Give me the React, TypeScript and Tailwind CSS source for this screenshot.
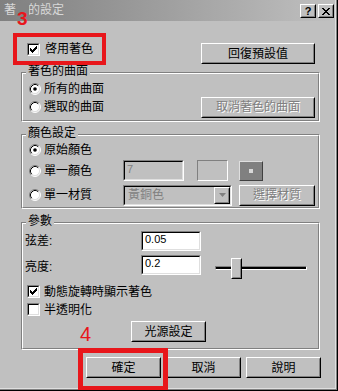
import React from "react";

type Kids = { children?: React.ReactNode };

// raised 3d button, win9x style
function Button({ className, children, disabled }: Kids & { className: string; disabled?: boolean }) {
  return (
    <div className={`${className} shrink-0 border border-t-white border-l-white border-r-black border-b-black`}>
      <div className="h-full flex items-center justify-center border border-t-[#c0c0c0] border-l-[#c0c0c0] border-r-[#808080] border-b-[#808080]">
        <span className={disabled ? "leading-[14px] text-[#808080] [text-shadow:1px_1px_0_#ffffff]" : "leading-[14px] text-black"}>
          {children}
        </span>
      </div>
    </div>
  );
}

function Sunken({ className, children }: Kids & { className: string }) {
  return (
    <div className={`${className} shrink-0 border border-t-[#808080] border-l-[#808080] border-r-white border-b-white`}>
      <div className="h-full flex items-center border border-t-black border-l-black border-r-[#dfdfdf] border-b-[#dfdfdf]">
        {children}
      </div>
    </div>
  );
}

function Check({ checked }: { checked?: boolean }) {
  return (
    <div className="w-[13px] h-[13px] shrink-0 border border-t-[#808080] border-l-[#808080] border-r-white border-b-white">
      <div className="w-full h-full bg-white border border-t-black border-l-black border-r-[#dfdfdf] border-b-[#dfdfdf]">
        {checked && (
          <svg width="9" height="9" viewBox="0 0 9 9" shapeRendering="crispEdges">
            <path
              d="M1 3h1v3h-1z M2 4h1v3h-1z M3 5h1v3h-1z M4 4h1v3h-1z M5 3h1v3h-1z M6 2h1v3h-1z M7 1h1v3h-1z"
              fill="#000"
            />
          </svg>
        )}
      </div>
    </div>
  );
}

function Radio({ checked }: { checked?: boolean }) {
  return (
    <svg width="12" height="12" viewBox="0 0 12 12" className="shrink-0">
      <circle cx="6" cy="6" r="5" fill="#fff" />
      <path d="M2.11 9.89 A5.5 5.5 0 0 1 9.89 2.11" stroke="#808080" fill="none" />
      <path d="M9.89 2.11 A5.5 5.5 0 0 1 2.11 9.89" stroke="#fff" fill="none" />
      <path d="M2.82 9.18 A4.5 4.5 0 0 1 9.18 2.82" stroke="#000" fill="none" />
      <path d="M9.18 2.82 A4.5 4.5 0 0 1 2.82 9.18" stroke="#dfdfdf" fill="none" />
      {checked && <circle cx="6" cy="6" r="1.8" fill="#000" />}
    </svg>
  );
}

function Group({ title, className, children }: Kids & { title: string; className: string }) {
  return (
    <div className={`${className} relative w-[299px] border border-t-[#808080] border-l-[#808080] border-r-white border-b-white`}>
      <div className="h-full border border-t-white border-l-white border-r-[#808080] border-b-[#808080]">{children}</div>
      <div className="absolute left-[4px] top-[-9px] bg-[#c0c0c0] px-[2px] leading-[14px]">{title}</div>
    </div>
  );
}

function TitleBtn({ children }: Kids) {
  return (
    <div className="w-[16px] h-[14px] border border-t-white border-l-white border-r-black border-b-black bg-[#c0c0c0]">
      <div className="h-full flex items-center justify-center border border-t-[#c0c0c0] border-l-[#c0c0c0] border-r-[#808080] border-b-[#808080]">
        {children}
      </div>
    </div>
  );
}

export default function App() {
  return (
    <div className="relative w-[338px] h-[391px] overflow-hidden bg-[#c0c0c0] text-[12px] text-black font-['Liberation_Sans','Noto_Sans_CJK_TC',sans-serif] border-r border-b border-black">
      <div className="h-full border-r border-b border-[#808080]">
        <div className="h-full border-r border-b border-[#dfdfdf]">
          {/* title bar */}
          <div className="h-[21px] flex items-start bg-linear-to-r from-[#808080] to-[#c0c0c0]">
            <span className="pl-[4px] pt-[3px] leading-[15px] text-[#d8d8d8]">著色的設定</span>
            <div className="ml-auto mt-[4px] mr-[1px] flex gap-[2px]">
              <TitleBtn>
                <span className="font-bold text-[11px] leading-[11px] font-['Liberation_Sans',sans-serif]">?</span>
              </TitleBtn>
              <TitleBtn>
                <svg width="8" height="7" viewBox="0 0 8 7" shapeRendering="crispEdges">
                  <path
                    d="M0 0h2v1h-2z M6 0h2v1h-2z M1 1h2v1h-2z M5 1h2v1h-2z M2 2h4v1h-4z M3 3h2v1h-2z M2 4h4v1h-4z M1 5h2v1h-2z M5 5h2v1h-2z M0 6h2v1h-2z M6 6h2v1h-2z"
                    fill="#000"
                  />
                </svg>
              </TitleBtn>
            </div>
          </div>

          <div className="flex flex-col pl-[21px]">
            {/* enable row */}
            <div className="mt-[22px] h-[20px] w-[299px] pr-[5px] flex items-start justify-between">
              <div className="pl-[6px] flex items-center gap-[5px]">
                <Check checked />
                <span className="leading-[13px]">啓用著色</span>
              </div>
              <Button className="w-[114px] h-[21px]">回復預設值</Button>
            </div>

            <Group title="著色的曲面" className="mt-[9px] h-[50px]">
              <div className="pt-[9px] pl-[6px] pr-[3px] flex flex-col">
                <div className="h-[12px] flex items-center gap-[3px]">
                  <Radio checked />
                  <span className="leading-[14px]">所有的曲面</span>
                </div>
                <div className="mt-[2px] h-[20px] flex items-center justify-between">
                  <div className="flex items-center gap-[3px]">
                    <Radio />
                    <span className="leading-[14px]">選取的曲面</span>
                  </div>
                  <Button className="w-[114px] h-[21px]" disabled>
                    取消著色的曲面
                  </Button>
                </div>
              </div>
            </Group>

            <Group title="顏色設定" className="mt-[12px] h-[75px]">
              <div className="pt-[7px] pl-[6px] flex flex-col">
                <div className="h-[14px] flex items-center gap-[3px]">
                  <Radio checked />
                  <span className="leading-[14px]">原始顏色</span>
                </div>
                <div className="mt-[3px] h-[21px] flex items-center">
                  <div className="w-[94px] flex items-center gap-[3px]">
                    <Radio />
                    <span className="leading-[14px]">單一顏色</span>
                  </div>
                  <Sunken className="w-[61px] h-[21px]">
                    <span className="pl-[2px] text-[11px] text-[#808080] leading-[13px] self-start pt-[1px]">7</span>
                  </Sunken>
                  <div className="ml-[13px] w-[31px] h-[21px] border border-t-[#808080] border-l-[#808080] border-r-white border-b-white" />
                  <div className="ml-[11px] w-[24px] h-[20px] border border-t-[#dfdfdf] border-l-[#dfdfdf] border-r-[#404040] border-b-[#404040] bg-[#808080] flex items-center justify-center">
                    <div className="w-[4px] h-[4px] bg-[#d8d8d8]" />
                  </div>
                </div>
                <div className="mt-[3px] h-[22px] flex items-center">
                  <div className="w-[94px] flex items-center gap-[3px]">
                    <Radio />
                    <span className="leading-[14px]">單一材質</span>
                  </div>
                  <Sunken className="w-[109px] h-[21px]">
                    <span className="pl-[3px] text-[#808080] leading-[14px] flex-1">黃銅色</span>
                    <div className="w-[16px] h-full border border-t-white border-l-white border-r-black border-b-black">
                      <div className="h-full flex items-center justify-center border border-t-[#c0c0c0] border-l-[#c0c0c0] border-r-[#808080] border-b-[#808080]">
                        <svg width="7" height="5" viewBox="0 0 7 5">
                          <path d="M0 0h7l-3.5 4z" fill="#808080" />
                        </svg>
                      </div>
                    </div>
                  </Sunken>
                  <Button className="ml-[7px] w-[76px] h-[21px]" disabled>
                    選擇材質
                  </Button>
                </div>
              </div>
            </Group>

            <Group title="參數" className="mt-[13px] h-[128px]">
              <div className="pt-[7px] flex flex-col">
                <div className="h-[20px] flex items-center">
                  <span className="w-[118px] pl-[2px] leading-[14px]">弦差:</span>
                  <Sunken className="w-[60px] h-[20px] bg-white">
                    <span className="pl-[2px] text-[11px] leading-[13px] self-start">0.05</span>
                  </Sunken>
                </div>
                <div className="mt-[4px] h-[24px] flex items-start">
                  <span className="w-[118px] h-[20px] pl-[2px] leading-[24px]">亮度:</span>
                  <Sunken className="w-[60px] h-[20px] bg-white">
                    <span className="pl-[2px] text-[11px] leading-[13px] self-start">0.2</span>
                  </Sunken>
                  <div className="relative ml-[14px] w-[92px] h-[24px]">
                    <div className="mt-[11px] h-[4px] border border-t-[#808080] border-l-[#808080] border-r-white border-b-white">
                      <div className="h-[2px] bg-black" />
                    </div>
                    <div className="absolute left-[16px] top-[3px] w-[11px] h-[21px] border border-t-white border-l-white border-r-black border-b-black">
                      <div className="h-full bg-[#c0c0c0] border border-t-[#c0c0c0] border-l-[#c0c0c0] border-r-[#808080] border-b-[#808080]" />
                    </div>
                  </div>
                </div>
                <div className="mt-[6px] h-[13px] pl-[4px] flex items-center gap-[4px]">
                  <Check checked />
                  <span className="leading-[14px]">動態旋轉時顯示著色</span>
                </div>
                <div className="mt-[5px] h-[13px] pl-[4px] flex items-center gap-[4px]">
                  <Check />
                  <span className="leading-[14px]">半透明化</span>
                </div>
                <div className="mt-[5px] pl-[108px]">
                  <Button className="w-[75px] h-[21px]">光源設定</Button>
                </div>
              </div>
            </Group>

            <div className="mt-[7px] pl-[65px] flex gap-[5px]">
              <Button className="w-[75px] h-[21px]">確定</Button>
              <Button className="w-[75px] h-[21px]">取消</Button>
              <Button className="w-[75px] h-[21px]">說明</Button>
            </div>
          </div>
        </div>
      </div>

      {/* red annotations drawn over the dialog */}
      <div className="absolute left-[16px] top-[3px] w-[13px] h-[16px] bg-[#848484]" />
      <span className="absolute left-[17px] top-[9px] text-[19px] leading-[19px] font-bold text-[#e8161b] font-['Liberation_Sans',sans-serif]">
        3
      </span>
      <div className="absolute left-[13px] top-[33px] w-[93px] h-[32px] border-4 border-[#e8161b]" />
      <span className="absolute left-[80px] top-[324px] text-[20px] leading-[20px] text-[#e8161b] font-['Liberation_Sans',sans-serif]">
        4
      </span>
      <div className="absolute left-[78px] top-[348px] w-[90px] h-[43px] border-[5px] border-[#e8161b]" />
    </div>
  );
}
